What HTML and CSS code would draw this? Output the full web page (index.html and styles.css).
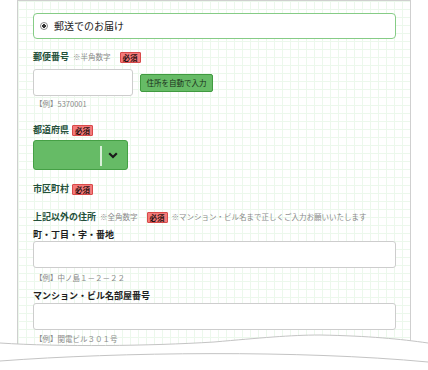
FILE: index.html
```html
<!DOCTYPE html>
<html lang="ja">
<head>
<meta charset="utf-8">
<link rel="stylesheet" href="styles.css">
</head>
<body>
<div class="page">
  <div class="panel">
    <div class="radio-box">
      <span class="radio"></span>
      <span class="radio-text">郵送でのお届け</span>
    </div>

    <div class="label lbl-zip">郵便番号<span class="note">※半角数字</span><span class="badge">必須</span></div>
    <div class="zip-row">
      <div class="input zip"></div>
      <button class="auto-btn">住所を自動で入力</button>
    </div>
    <div class="example ex-zip">【例】5370001</div>

    <div class="label lbl-pref">都道府県<span class="badge">必須</span></div>
    <div class="select">
      <span class="divider"></span>
      <svg class="chev" width="10" height="7" viewBox="0 0 10 7"><path d="M1.2 1.2 L5 5 L8.8 1.2" fill="none" stroke="#1a1a1a" stroke-width="2.2"/></svg>
    </div>

    <div class="label lbl-city">市区町村<span class="badge">必須</span></div>

    <div class="label lbl-other">上記以外の住所<span class="note">※全角数字</span><span class="badge">必須</span><span class="note note-long">※マンション・ビル名まで正しくご入力お願いいたします</span></div>

    <div class="label dark lbl-town">町・丁目・字・番地</div>
    <div class="input wide"></div>
    <div class="example ex-town">【例】中ノ島１－２－２２</div>

    <div class="label dark lbl-bldg">マンション・ビル名部屋番号</div>
    <div class="input wide in-bldg"></div>
    <div class="example ex-bldg">【例】関電ビル３０１号</div>
  </div>

  <svg class="tear" width="428" height="50" viewBox="0 320 428 50">
    <path d="M0 343 C 60 347 150 346 214 342 C 260 338 290 335 320 335 C 370 336 400 339 428 343 L428 370 L0 370 Z" fill="#fff"/>
    <path d="M0 343 C 60 347 150 346 214 342 C 260 338 290 335 320 335 C 370 336 400 339 428 343" fill="none" stroke="#c4c4c4" stroke-width="1"/>
    <path d="M0 361 C 120 352 300 350 428 362" fill="none" stroke="#c4c4c4" stroke-width="1"/>
  </svg>
</div>
</body>
</html>
```

FILE: styles.css
```css
* { box-sizing: border-box; }
html, body { margin: 0; padding: 0; background: #fff; }
body {
  font-family: "Noto Sans CJK JP", "Noto Sans", sans-serif;
  width: 428px;
  height: 370px;
  overflow: hidden;
}
.page {
  position: relative;
  width: 428px;
  height: 370px;
  overflow: hidden;
}
.panel {
  margin-left: 17px;
  width: 394px;
  height: 370px;
  border: 1px solid #cfcfcf;
  border-bottom: none;
  padding: 12px 14px 0 15px;
  background-color: #fff;
  background-image:
    linear-gradient(to right, #ecf8ec 1px, transparent 1px),
    linear-gradient(to bottom, #ecf8ec 1px, transparent 1px);
  background-size: 8px 8px;
}
.radio-box {
  height: 26px;
  border: 1.5px solid #86cc86;
  border-radius: 4px;
  background: #fff;
  display: flex;
  align-items: center;
  padding-left: 6px;
}
.radio {
  width: 8px;
  height: 8px;
  border-radius: 50%;
  border: 1px solid #8a8a8a;
  background: radial-gradient(circle, #333 0 1.6px, #fff 2px);
  margin-right: 6px;
}
.radio-text {
  font-size: 10px;
  line-height: 12px;
  color: #222;
}
.label {
  font-size: 9px;
  line-height: 12px;
  height: 12px;
  font-weight: bold;
  color: #24503a;
  display: flex;
  align-items: center;
  white-space: nowrap;
}
.label.dark { color: #1e1e1e; }
.note {
  font-size: 7.5px;
  font-weight: normal;
  color: #8a8a8a;
  margin-left: 4px;
}
.note-long { margin-left: 4px; }
.badge {
  font-size: 7.5px;
  font-weight: bold;
  line-height: 9px;
  color: #2a1010;
  background: #f47a7a;
  border: 1px solid #d84a4a;
  border-radius: 1px;
  padding: 0 2px;
  margin-left: 3px;
}
.lbl-zip .badge { margin-left: 9px; }
.lbl-other .badge { margin-left: 9px; }
.lbl-zip { margin-top: 12px; }
.zip-row {
  margin-top: 6px;
  display: flex;
  align-items: center;
  gap: 7px;
}
.input {
  height: 27px;
  border: 1px solid #cdcdcd;
  border-radius: 3px;
  background: #fff;
}
.zip { width: 100px; }
.auto-btn {
  height: 18px;
  width: 73px;
  padding: 0;
  font-family: inherit;
  font-size: 7.5px;
  line-height: 16px;
  color: #1a2e1a;
  background: #66bb66;
  border: 1px solid #3f9a3f;
  border-radius: 2px;
}
.example {
  font-size: 7.5px;
  line-height: 10px;
  color: #8a8a8a;
}
.ex-zip { margin-top: 3px; padding-left: 2px; }
.lbl-pref { margin-top: 15px; }
.select {
  margin-top: 4px;
  width: 95px;
  height: 30px;
  background: #66bb66;
  border: 1px solid #45a045;
  border-radius: 3px;
  position: relative;
  display: flex;
  align-items: center;
  justify-content: flex-end;
  padding-right: 9px;
}
.divider {
  position: absolute;
  left: 66px;
  top: 5px;
  width: 2px;
  height: 20px;
  background: #d9f0d9;
}
.chev { display: block; }
.lbl-city { margin-top: 13px; }
.lbl-other { margin-top: 16px; }
.lbl-town { margin-top: 6px; }
.wide { width: 363px; }
.ex-town { margin-top: 5px; padding-left: 2px; }
.lbl-bldg { margin-top: 7px; }
.in-bldg { margin-top: 1px; }
.ex-bldg { margin-top: 4px; padding-left: 2px; }
.tear {
  position: absolute;
  left: 0;
  bottom: 0;
  display: block;
}
```
